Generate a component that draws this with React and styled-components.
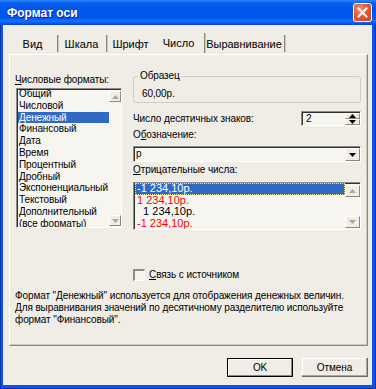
import React from 'react';
import styled, { createGlobalStyle } from 'styled-components';

const Global = createGlobalStyle`
  html, body { margin: 0; padding: 0; background: #ffffff; }
  body { font-family: "Liberation Sans", Arial, sans-serif; font-size: 10px; letter-spacing: -0.1px; color: #000; }
  * { box-sizing: border-box; }
`;

const BG = '#EFEDE6';

const Window = styled.div`
  width: 376px;
  height: 389px;
  display: flex;
  flex-direction: column;
  background: #0A55E2;
  box-shadow: inset 1px 0 0 #0831B8, inset -1px 0 0 #0831B8, inset 0 -1px 0 #0831B8;
`;

const TitleBar = styled.div`
  height: 25px;
  flex: none;
  display: flex;
  align-items: center;
  justify-content: space-between;
  padding: 0 4px 0 7px;
  background: linear-gradient(180deg, #2C86FF 0, #0A5FEF 3px, #0055EA 10px, #0058EE 18px, #1A6FFF 21px, #0A5AEE 23px, #0042D6 25px);
`;

const Title = styled.span`
  font-family: "Liberation Sans", Arial, sans-serif;
  font-weight: bold;
  font-size: 12px;
  letter-spacing: 0;
  color: #fff;
  text-shadow: 1px 1px 0 #0B1F8F;
  padding-top: 1px;
`;

const CloseButton = styled.div`
  width: 19px;
  height: 19px;
  border: 1px solid #ffffff;
  border-radius: 3px;
  background: radial-gradient(circle at 35% 30%, #F0937A 0, #E05A36 45%, #C8411C 100%);
  display: flex;
  align-items: center;
  justify-content: center;
`;

const Body = styled.div`
  flex: 1;
  margin: 0 4px 4px 3px;
  background: ${BG};
  padding: 7px 0 0 6px;
  display: flex;
  flex-direction: column;
`;

const TabStrip = styled.div`
  display: flex;
  align-items: flex-start;
  height: 22px;
`;

const Tab = styled.div`
  width: ${p => p.$w}px;
  height: ${p => (p.$active ? 20 : 17)}px;
  margin-top: ${p => (p.$active ? 1 : 3)}px;
  display: flex;
  align-items: center;
  justify-content: center;
  padding-right: ${p => (p.$sep ? 1 : 0)}px;
  border-right: ${p => (p.$sep ? '1px solid #8B887C' : 'none')};
  box-shadow: ${p => (p.$sep ? '1px 0 0 #C9C6B8' : 'none')};
  font-size: 11px;
  letter-spacing: 0;
  white-space: nowrap;
`;

const Panel = styled.div`
  width: 359px;
  height: 292px;
  border-top: 1px solid #ffffff;
  border-left: 1px solid #ffffff;
  border-right: 1px solid #8B887C;
  border-bottom: 1px solid #8B887C;
  box-shadow: inset -1px -1px 0 #CCC9BB;
  padding: 15px 6px 0 5px;
  display: flex;
  flex-direction: column;
`;

const Columns = styled.div`
  display: grid;
  grid-template-columns: 107px 228px;
  column-gap: 11px;
  align-items: start;
`;

const Column = styled.div`
  display: flex;
  flex-direction: column;
`;

const Label = styled.div`
  line-height: 13px;
  height: 13px;
  margin-top: ${p => p.$mt || 0}px;
  white-space: nowrap;
`;

const Key = styled.span`
  text-decoration: underline;
`;

const Sunken = styled.div`
  background: #F6F5F0;
  border-top: 1px solid #8A8A8A;
  border-left: 1px solid #8A8A8A;
  border-right: 1px solid #ffffff;
  border-bottom: 1px solid #ffffff;
  box-shadow: inset 1px 1px 0 #303030;
`;

const ListBox = styled(Sunken)`
  margin-top: ${p => p.$mt || 0}px;
  margin-left: ${p => p.$ml || 0}px;
  width: ${p => p.$w}px;
  height: ${p => p.$h}px;
  display: flex;
  overflow: hidden;
  padding: 1px 0 0 1px;
`;

const Items = styled.div`
  flex: 1;
  overflow: hidden;
  margin-top: ${p => p.$mt || 0}px;
`;

const Item = styled.div`
  height: ${p => p.$h}px;
  line-height: ${p => p.$h}px;
  padding-left: ${p => p.$pl || 1}px;
  white-space: nowrap;
  font-size: ${p => p.$fs || 10}px;
  letter-spacing: ${p => (p.$fs ? 0 : -0.1)}px;
  color: ${p => (p.$selected ? '#ffffff' : p.$red ? '#FF0000' : '#000000')};
  background: ${p => (p.$selected ? '#316AC5' : 'transparent')};
  outline: ${p => (p.$focus ? '1px dotted #E8E8A0' : 'none')};
  outline-offset: -1px;
`;

const ScrollBar = styled.div`
  width: ${p => p.$w}px;
  flex: none;
  display: flex;
  flex-direction: column;
  justify-content: space-between;
  padding: 1px 0 1px;
`;

const ArrowButton = styled.div`
  width: 100%;
  height: ${p => p.$h}px;
  flex: ${p => (p.$grow ? 1 : 'none')};
  background: ${BG};
  border-top: 1px solid #ffffff;
  border-left: 1px solid #ffffff;
  border-right: 1px solid #8B887C;
  border-bottom: 1px solid #8B887C;
  display: flex;
  align-items: center;
  justify-content: center;
`;

const Fieldset = styled.fieldset`
  margin: 0;
  padding: 5px 4px 1px 4px;
  border: 1px solid #CFCDC1;
  border-radius: 3px;
  height: 33px;
`;

const Legend = styled.legend`
  padding: 0 2px;
  line-height: 12px;
  font-size: 10px;
`;

const Sample = styled.div`
  line-height: 14px;
  padding-left: 4px;
`;

const FieldRow = styled.div`
  display: flex;
  align-items: center;
  justify-content: space-between;
  margin-top: ${p => p.$mt || 0}px;
`;

const Field = styled(Sunken)`
  width: ${p => p.$w}px;
  height: ${p => p.$h}px;
  margin-top: ${p => p.$mt || 0}px;
  display: flex;
  align-items: stretch;
  padding: 1px 0 0 1px;
`;

const FieldText = styled.div`
  flex: 1;
  padding-left: ${p => p.$pl || 2}px;
  line-height: 12px;
`;

const SpinButtons = styled.div`
  width: 15px;
  display: flex;
  flex-direction: column;
`;

const CheckRow = styled.div`
  display: flex;
  align-items: center;
  height: 13px;
  margin-top: 38px;
`;

const CheckBox = styled.div`
  width: 12px;
  height: 12px;
  background: #F4F3EE;
  border-top: 2px solid #8E8C84;
  border-left: 2px solid #8E8C84;
  border-right: 1px solid #ffffff;
  border-bottom: 1px solid #ffffff;
  margin-right: 4px;
`;

const Description = styled.div`
  margin-top: 9px;
  line-height: 12px;
  white-space: nowrap;
`;

const ButtonRow = styled.div`
  display: flex;
  justify-content: flex-end;
  gap: 9px;
  margin-top: 12px;
  padding-right: 4px;
`;

const Button = styled.div`
  width: 66px;
  height: 19px;
  display: flex;
  align-items: center;
  justify-content: center;
  background: ${BG};
  border: ${p => (p.$default ? '1px solid #000' : 'none')};
  border-right: 1px solid ${p => (p.$default ? '#000' : '#6E6C62')};
  border-bottom: 1px solid ${p => (p.$default ? '#000' : '#6E6C62')};
  box-shadow: ${p => (p.$default
    ? 'inset -1px -1px 0 #8B887C, inset 1px 1px 0 #ffffff'
    : 'inset -1px -1px 0 #ACA899, inset 1px 1px 0 #ffffff')};
`;

const Arrow = ({ dir = 'down', color = '#000' }) => (
  <svg width="7" height="4" viewBox="0 0 7 4">
    {dir === 'down'
      ? <polygon points="0,0 7,0 3.5,4" fill={color} />
      : <polygon points="0,4 7,4 3.5,0" fill={color} />}
  </svg>
);

const formats = [
  'Общий', 'Числовой', 'Денежный', 'Финансовый', 'Дата', 'Время', 'Процентный',
  'Дробный', 'Экспоненциальный', 'Текстовый', 'Дополнительный', '(все форматы)',
];

const negatives = [
  { text: '-1 234,10р.', selected: true },
  { text: '1 234,10р.', red: true },
  { text: '\u20071 234,10р.' },
  { text: '-1 234,10р.', red: true },
];

const tabs = [
  { label: 'Вид', w: 49, sep: true },
  { label: 'Шкала', w: 49, sep: true },
  { label: 'Шрифт', w: 47, sep: false },
  { label: 'Число', w: 51, sep: true, active: true },
  { label: 'Выравнивание', w: 80, sep: true },
];

export default function App() {
  return (
    <>
      <Global />
      <Window>
        <TitleBar>
          <Title>Формат оси</Title>
          <CloseButton>
            <svg width="11" height="11" viewBox="0 0 11 11">
              <path d="M1.5 1.5 L9.5 9.5 M9.5 1.5 L1.5 9.5" stroke="#fff" strokeWidth="2" strokeLinecap="square" />
            </svg>
          </CloseButton>
        </TitleBar>
        <Body>
          <TabStrip>
            {tabs.map(t => (
              <Tab key={t.label} $w={t.w} $sep={t.sep} $active={t.active}>{t.label}</Tab>
            ))}
          </TabStrip>
          <Panel>
            <Columns>
              <Column>
                <Label $mt={3}><Key>Ч</Key>исловые форматы:</Label>
                <ListBox $mt={2} $ml={1} $w={106} $h={140}>
                  <Items $mt={-2}>
                    {formats.map(f => (
                      <Item key={f} $h={11.8} $selected={f === 'Денежный'}>{f}</Item>
                    ))}
                  </Items>
                  <ScrollBar $w={12}>
                    <ArrowButton $h={11}><Arrow dir="up" color="#ACA899" /></ArrowButton>
                    <ArrowButton $h={11}><Arrow dir="down" color="#ACA899" /></ArrowButton>
                  </ScrollBar>
                </ListBox>
              </Column>
              <Column>
                <Fieldset>
                  <Legend>Образец</Legend>
                  <Sample>60,00р.</Sample>
                </Fieldset>
                <FieldRow $mt={8}>
                  <span>Число десятичных знаков:</span>
                  <Field $w={60} $h={15}>
                    <FieldText $pl={3}>2</FieldText>
                    <SpinButtons>
                      <ArrowButton $grow><Arrow dir="up" /></ArrowButton>
                      <ArrowButton $grow><Arrow dir="down" /></ArrowButton>
                    </SpinButtons>
                  </Field>
                </FieldRow>
                <Label $mt={2}>О<Key>б</Key>означение:</Label>
                <Field $w={228} $h={16} $mt={5}>
                  <FieldText $pl={1}>р</FieldText>
                  <SpinButtons>
                    <ArrowButton $grow><Arrow dir="down" /></ArrowButton>
                  </SpinButtons>
                </Field>
                <Label $mt={1}><Key>О</Key>трицательные числа:</Label>
                <ListBox $mt={6} $w={228} $h={48}>
                  <Items $mt={-1}>
                    {negatives.map((n, i) => (
                      <Item key={i} $h={11.5} $pl={2} $fs={11} $selected={n.selected} $focus={n.selected} $red={n.red}>{n.text}</Item>
                    ))}
                  </Items>
                  <ScrollBar $w={15}>
                    <ArrowButton $h={12}><Arrow dir="up" color="#ACA899" /></ArrowButton>
                    <ArrowButton $h={12}><Arrow dir="down" color="#ACA899" /></ArrowButton>
                  </ScrollBar>
                </ListBox>
                <CheckRow>
                  <CheckBox />
                  <span><Key>С</Key>вязь с источником</span>
                </CheckRow>
              </Column>
            </Columns>
            <Description>
              Формат "Денежный" используется для отображения денежных величин.<br />
              Для выравнивания значений по десятичному разделителю используйте<br />
              формат "Финансовый".
            </Description>
          </Panel>
          <ButtonRow>
            <Button $default>OK</Button>
            <Button>Отмена</Button>
          </ButtonRow>
        </Body>
      </Window>
    </>
  );
}
